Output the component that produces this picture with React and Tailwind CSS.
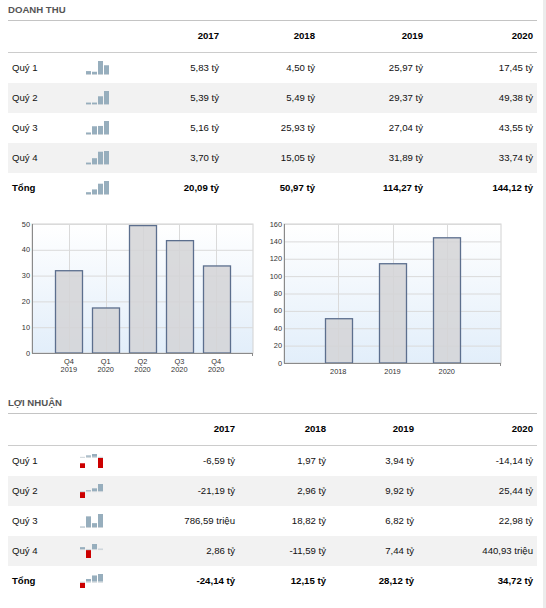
import React from "react";

const FONT = { fontFamily: '"Liberation Sans", Arial, sans-serif' };

function Spark({ values }) {
  const posMax = Math.max(0, ...values);
  const negMax = Math.max(0, ...values.map((v) => -v));
  const scale = 13 / (posMax + negMax);
  const y0 = posMax * scale;
  const bottom = y0 + 1 + negMax * scale;
  return (
    <svg width="24" height="15" viewBox="0 0 24 15" className="block">
      {values.map((v, i) => {
        const x = i * 6;
        const h = Math.abs(v) * scale;
        return (
          <g key={i}>
            {v >= 0 ? (
              <rect x={x} y={y0 - h} width="5" height={h} fill="#97aebd" />
            ) : (
              <rect x={x} y={bottom - h} width="5" height={h} fill="#cc0000" />
            )}
            <rect x={x} y={y0} width="5" height="1" fill="#cdd4d9" />
          </g>
        );
      })}
    </svg>
  );
}

function Table({ title, cols, years, rows }) {
  return (
    <div>
      <div className="h-[21px] flex items-end pb-[5px] border-b border-[#c4c4c4] text-[9.6px] leading-none font-bold text-[#555]">
        {title}
      </div>
      <div className={`grid ${cols} h-[32px] items-center border-b border-[#cccccc] text-[9.6px] font-bold text-black`}>
        <div />
        <div />
        {years.map((y) => (
          <div key={y} className="text-right pr-[4px]">
            {y}
          </div>
        ))}
      </div>
      {rows.map((r, idx) => (
        <div
          key={r.label}
          className={`grid ${cols} h-[30px] items-center text-[9.6px] text-[#111] ${
            idx % 2 === 1 ? "bg-[#f2f2f2]" : ""
          } ${r.bold ? "font-bold text-black" : ""}`}
        >
          <div className="pl-[4px]">{r.label}</div>
          <div>
            <Spark values={r.spark} />
          </div>
          {r.vals.map((v, i) => (
            <div key={i} className="text-right pr-[4px] whitespace-nowrap">
              {v}
            </div>
          ))}
        </div>
      ))}
    </div>
  );
}

function BarChart({ id, width, height, L, R, T, B, max, step, slots, data }) {
  const slot = (R - L) / slots;
  const y = (v) => B - (v / max) * (B - T);
  const ticks = [];
  for (let v = 0; v <= max; v += step) ticks.push(v);
  return (
    <svg width={width} height={height} className="block" style={FONT}>
      <defs>
        <linearGradient id={id} x1="0" y1="0" x2="0" y2="1">
          <stop offset="0" stopColor="#ffffff" />
          <stop offset="1" stopColor="#e2eefa" />
        </linearGradient>
      </defs>
      <rect x={L} y={T} width={R - L} height={B - T} fill={`url(#${id})`} stroke="#d2d2d2" strokeWidth="1" />
      {ticks.map((v) => (
        <line key={v} x1={L} x2={R} y1={y(v) + 0.5} y2={y(v) + 0.5} stroke="#dadada" strokeWidth="1" />
      ))}
      {data.map((d, i) => {
        const cx = L + slot * (i + 1);
        return (
          <line key={i} x1={Math.round(cx) + 0.5} x2={Math.round(cx) + 0.5} y1={T} y2={B} stroke="#dadada" strokeWidth="1" />
        );
      })}
      {data.map((d, i) => {
        const cx = L + slot * (i + 1);
        const top = y(d.v);
        return (
          <rect
            key={i}
            x={Math.round(cx - 13.5) + 0.5}
            y={top}
            width="27"
            height={B - top}
            fill="#d3d4d6"
            fillOpacity="0.85"
            stroke="#5c6f8e"
            strokeWidth="1.3"
          />
        );
      })}
      <line x1={L + 0.5} x2={L + 0.5} y1={T} y2={B + 1} stroke="#8a8a8a" strokeWidth="1" />
      <line x1={L} x2={R} y1={B + 0.5} y2={B + 0.5} stroke="#8a8a8a" strokeWidth="1" />
      <line x1={R - 0.5} x2={R - 0.5} y1={B} y2={B + 3} stroke="#8a8a8a" strokeWidth="1" />
      {ticks.map((v) => (
        <text key={v} x={L - 2} y={y(v)} dy="0.35em" textAnchor="end" fontSize="7.4" fill="#333">
          {v}
        </text>
      ))}
      {data.map((d, i) => {
        const cx = L + slot * (i + 1);
        return (
          <text key={i} textAnchor="middle" fontSize="7.4" fill="#333">
            {d.l.map((line, j) => (
              <tspan key={j} x={cx} y={B + 10.5 + j * 8.3}>
                {line}
              </tspan>
            ))}
          </text>
        );
      })}
    </svg>
  );
}

const COLS1 = "grid-cols-[78px_34px_103px_96px_108px_110px]";
const COLS2 = "grid-cols-[72px_40px_119px_91px_88px_119px]";

const rows1 = [
  { label: "Quý 1", spark: [5.83, 4.5, 25.97, 17.45], vals: ["5,83 tỷ", "4,50 tỷ", "25,97 tỷ", "17,45 tỷ"] },
  { label: "Quý 2", spark: [5.39, 5.49, 29.37, 49.38], vals: ["5,39 tỷ", "5,49 tỷ", "29,37 tỷ", "49,38 tỷ"] },
  { label: "Quý 3", spark: [5.16, 25.93, 27.04, 43.55], vals: ["5,16 tỷ", "25,93 tỷ", "27,04 tỷ", "43,55 tỷ"] },
  { label: "Quý 4", spark: [3.7, 15.05, 31.89, 33.74], vals: ["3,70 tỷ", "15,05 tỷ", "31,89 tỷ", "33,74 tỷ"] },
  { label: "Tổng", bold: true, spark: [20.09, 50.97, 114.27, 144.12], vals: ["20,09 tỷ", "50,97 tỷ", "114,27 tỷ", "144,12 tỷ"] },
];

const rows2 = [
  { label: "Quý 1", spark: [-6.59, 1.97, 3.94, -14.14], vals: ["-6,59 tỷ", "1,97 tỷ", "3,94 tỷ", "-14,14 tỷ"] },
  { label: "Quý 2", spark: [-21.19, 2.96, 9.92, 25.44], vals: ["-21,19 tỷ", "2,96 tỷ", "9,92 tỷ", "25,44 tỷ"] },
  { label: "Quý 3", spark: [0.78659, 18.82, 6.82, 22.98], vals: ["786,59 triệu", "18,82 tỷ", "6,82 tỷ", "22,98 tỷ"] },
  { label: "Quý 4", spark: [2.86, -11.59, 7.44, 0.44093], vals: ["2,86 tỷ", "-11,59 tỷ", "7,44 tỷ", "440,93 triệu"] },
  { label: "Tổng", bold: true, spark: [-24.14, 12.15, 28.12, 34.72], vals: ["-24,14 tỷ", "12,15 tỷ", "28,12 tỷ", "34,72 tỷ"] },
];

export default function App() {
  return (
    <div className="relative w-[546px] h-[608px] bg-white overflow-hidden" style={FONT}>
      <div className="w-[537px] pl-[8px]">
        <Table title="DOANH THU" cols={COLS1} years={["2017", "2018", "2019", "2020"]} rows={rows1} />
        <div className="h-[190px] pt-[7px] flex">
          <BarChart
            id="g1"
            width={256}
            height={172}
            L={24}
            R={245}
            T={14}
            B={143}
            max={50}
            step={10}
            slots={6}
            data={[
              { l: ["Q4", "2019"], v: 31.89 },
              { l: ["Q1", "2020"], v: 17.45 },
              { l: ["Q2", "2020"], v: 49.38 },
              { l: ["Q3", "2020"], v: 43.55 },
              { l: ["Q4", "2020"], v: 33.74 },
            ]}
          />
          <BarChart
            id="g2"
            width={260}
            height={172}
            L={20}
            R={237}
            T={14}
            B={153}
            max={160}
            step={20}
            slots={4}
            data={[
              { l: ["2018"], v: 50.97 },
              { l: ["2019"], v: 114.27 },
              { l: ["2020"], v: 144.12 },
            ]}
          />
        </div>
        <Table title="LỢI NHUẬN" cols={COLS2} years={["2017", "2018", "2019", "2020"]} rows={rows2} />
      </div>
      <div className="absolute right-0 top-0 w-[3px] h-full bg-[#ececec]" />
    </div>
  );
}
